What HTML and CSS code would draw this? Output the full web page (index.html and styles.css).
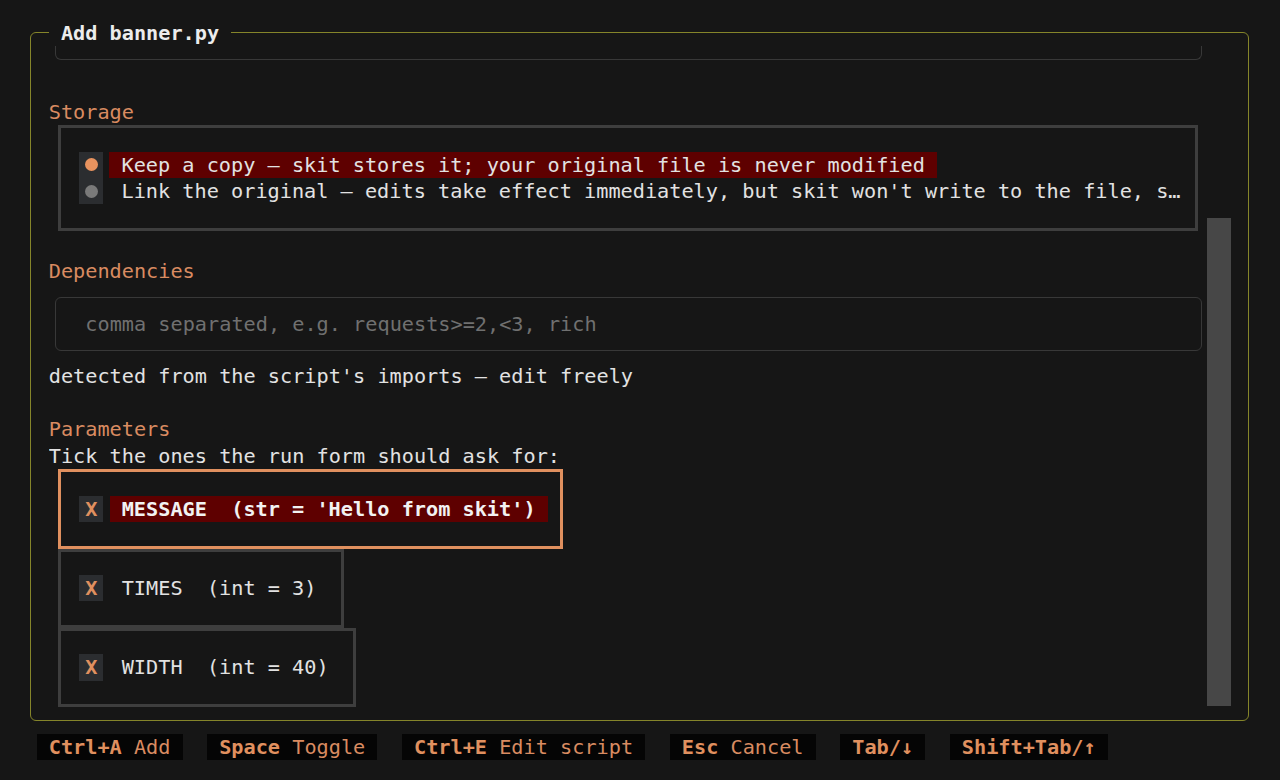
FILE: index.html
```html
<!DOCTYPE html>
<html>
<head>
<meta charset="utf-8">
<title>Add banner.py</title>
<link rel="stylesheet" href="styles.css">
</head>
<body>
<div class="screen">
  <section class="dialog">
    <div class="dialog-title">Add banner.py</div>
    <div class="viewport">
      <div class="content">
        <div class="row input-tail"><div class="input-tail-box"></div></div>
        <div class="row"></div>
        <div class="row section-label">Storage</div>
        <div class="radioset">
          <div class="radio">
            <span class="toggle"><span class="dot on"></span></span>
            <span class="label hl">Keep a copy — skit stores it; your original file is never modified</span>
          </div>
          <div class="radio">
            <span class="toggle"><span class="dot"></span></span>
            <span class="label">Link the original — edits take effect immediately, but skit won't write to the file, s…</span>
          </div>
        </div>
        <div class="row"></div>
        <div class="row section-label">Dependencies</div>
        <div class="input"><div class="input-box"><span class="placeholder">comma separated, e.g. requests&gt;=2,&lt;3, rich</span></div></div>
        <div class="row">detected from the script's imports — edit freely</div>
        <div class="row"></div>
        <div class="row section-label">Parameters</div>
        <div class="row">Tick the ones the run form should ask for:</div>
        <div class="check focused">
          <span class="toggle x">X</span>
          <span class="label hl strong">MESSAGE  (str = 'Hello from skit')</span>
        </div>
        <div class="check">
          <span class="toggle x">X</span>
          <span class="label">TIMES  (int = 3)</span>
        </div>
        <div class="check">
          <span class="toggle x">X</span>
          <span class="label">WIDTH  (int = 40)</span>
        </div>
      </div>
      <div class="scrollbar"><div class="thumb"></div></div>
    </div>
  </section>
  <footer class="footer">
    <span class="key"><b>Ctrl+A</b> Add</span>
    <span class="key"><b>Space</b> Toggle</span>
    <span class="key"><b>Ctrl+E</b> Edit script</span>
    <span class="key"><b>Esc</b> Cancel</span>
    <span class="key"><b>Tab/↓</b></span>
    <span class="key"><b>Shift+Tab/↑</b></span>
  </footer>
</div>
</body>
</html>
```
FILE: styles.css
```css
:root {
  --c: 12.18px;
  --r: 26.45px;
  --bg: #161616;
  --olive: #85852a;
  --orange: #e0905f;
  --orange-text: #d98b61;
  --text: #e2e2e2;
  --frame: #3e3e3e;
  --line: #383838;
}

* { box-sizing: border-box; }

html, body {
  margin: 0;
  padding: 0;
  background: var(--bg);
}

body {
  width: 1280px;
  height: 780px;
  overflow: hidden;
  font-family: "DejaVu Sans Mono", "Liberation Mono", monospace;
  font-size: 20.23px;
  line-height: var(--r);
  color: var(--text);
}

.screen {
  display: flex;
  flex-direction: column;
  padding-top: 32.4px;
  padding-left: 30px;
}

.dialog {
  position: relative;
  display: flex;
  width: 1219px;
  height: 688.75px;
  border: 1px solid var(--olive);
  border-radius: 6px;
  padding: 12.7px 16.6px 12.8px 17.72px;
}

.dialog-title {
  position: absolute;
  top: -13.72px;
  left: 17.72px;
  height: var(--r);
  padding: 0 var(--c);
  background: var(--bg);
  font-weight: bold;
  color: #ececec;
  white-space: pre;
}

.viewport {
  display: flex;
  flex: 1;
  height: 661.25px;
  overflow: hidden;
}

.content {
  width: 1157.1px;
  flex: none;
  display: flex;
  flex-direction: column;
}

.row {
  height: var(--r);
  flex: none;
  white-space: pre;
}

.section-label { color: var(--orange-text); }

.input-tail-box {
  height: 13.7px;
  margin: 0 4.3px 0 6.3px;
  border: 1px solid var(--line);
  border-top: none;
  border-radius: 0 0 6px 6px;
}

.radioset {
  flex: none;
  margin-left: 8.9px;
  width: 1140px;
  height: calc(var(--r) * 4);
  border: 3.3px solid var(--frame);
  border-left-width: 3.05px;
  border-right-width: 3.05px;
  padding-top: 23.15px;
  padding-left: 18.27px;
}

.radio {
  display: flex;
  height: var(--r);
}

.toggle {
  flex: none;
  width: calc(var(--c) * 2);
  height: var(--r);
  background: #2b2d30;
  display: flex;
  align-items: center;
  justify-content: center;
}

.dot {
  width: 13px;
  height: 13px;
  border-radius: 50%;
  background: #7a7a7a;
}

.dot.on { background: #e8935f; }

.label {
  margin-left: 6.09px;
  padding: 0 var(--c);
  white-space: pre;
  height: var(--r);
}

.label.hl { background: #5e0000; }
.label.strong { font-weight: bold; color: #f2f2f2; }

.input {
  flex: none;
  height: calc(var(--r) * 3);
  padding: 12.7px 4.3px 12.7px 6.3px;
}

.input-box {
  height: 100%;
  border: 1px solid var(--line);
  border-radius: 6px;
  display: flex;
  align-items: center;
  padding-left: 29.3px;
  white-space: pre;
}

.placeholder { color: #707070; }

.check {
  flex: none;
  align-self: flex-start;
  display: flex;
  align-items: center;
  height: calc(var(--r) * 3);
  margin-left: 9.1px;
  border-style: solid;
  border-color: var(--frame);
  border-width: 3.3px 3.05px;
  padding: 0 var(--c) 0 18.27px;
}

.check.focused { border-color: var(--orange); }

.toggle.x {
  color: var(--orange);
  font-weight: bold;
}

.scrollbar {
  flex: none;
  width: calc(var(--c) * 2);
  margin-left: 1.2px;
}

.thumb {
  margin-top: 171.6px;
  height: 488.3px;
  background: #474747;
}

.footer {
  display: flex;
  gap: calc(var(--c) * 2);
  margin-top: 12.65px;
  padding-left: 6.54px;
}

.key {
  height: var(--r);
  padding: 0 var(--c);
  background: #050505;
  color: var(--orange-text);
  white-space: pre;
}

.key b {
  color: var(--orange);
  font-weight: bold;
}
```
